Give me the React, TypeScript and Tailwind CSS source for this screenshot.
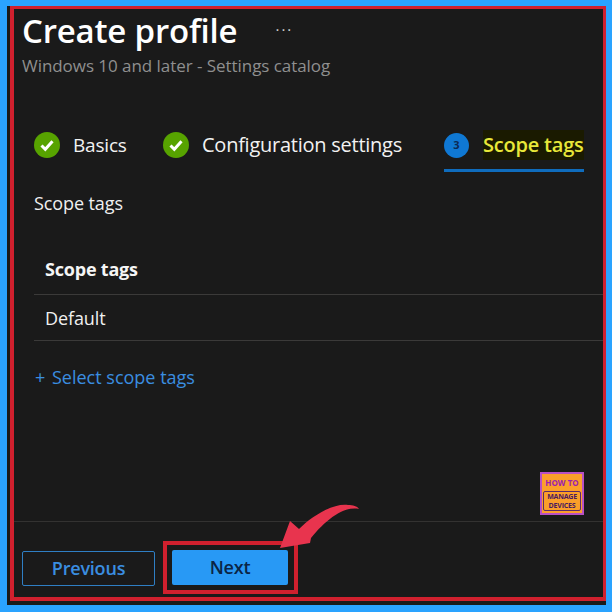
const font = 'font-["Open_Sans","Noto_Sans",sans-serif]';

const CheckBadge = () => (
  <svg width="26" height="26" viewBox="0 0 26 26" className="shrink-0">
    <circle cx="13" cy="13" r="13" fill="#57a300" />
    <path d="M7.5 13.5l3.8 3.8 7.2-8" fill="none" stroke="#ffffff" strokeWidth="3" />
  </svg>
);

const App = () => {
  return (
    <div className={`relative w-[612px] h-[612px] overflow-hidden bg-[#2aa3ff] pt-[6px] pl-[7px] ${font}`}>
      <div className="w-[599px] h-[599px] bg-[#1a1a1a] pl-[3px] pb-[4px]">
        <div className="h-full flex flex-col border-[#d0202e] border-t-[3px] border-l-4 border-r-[3px] border-b-4">
          {/* Header */}
          <div className="pl-2 pt-[3px]">
            <div className="flex items-center h-[38px]">
              <h1 className="text-[33px] leading-[38px] font-semibold text-white tracking-[-0.2px]">Create profile</h1>
              <span className="ml-[38px] mb-1 text-[15px] leading-none text-[#d0d0d0] tracking-[2px]">···</span>
            </div>
            <p className="mt-[5px] text-[17px] leading-[22px] text-[#8f8f8f] tracking-[-0.05px]">Windows 10 and later - Settings catalog</p>
          </div>

          {/* Steps */}
          <div className="flex items-start mt-[54px] pl-5 h-[53px]">
            <div className="flex items-center gap-[13px] w-[129px] h-[28px]">
              <CheckBadge />
              <span className="text-[19px] text-[#f2f2f2] tracking-[-0.2px]">Basics</span>
            </div>
            <div className="flex items-center gap-[13px] w-[281px] h-[28px]">
              <CheckBadge />
              <span className="text-[20px] text-[#f2f2f2] tracking-[-0.25px] whitespace-nowrap">Configuration settings</span>
            </div>
            <div className="flex flex-col w-[140px] h-[41px] border-b-[3px] border-[#0f6cbd]">
              <div className="flex items-center gap-[14px] h-[28px]">
                <span className="w-[25px] h-[25px] rounded-full bg-[#0f78d4] flex items-center justify-center text-[11px] font-bold text-[#0b2a55]">3</span>
                <span className="text-[20px] font-semibold text-[#e8e83a] bg-[#1a1a00] tracking-[-0.2px] whitespace-nowrap">Scope tags</span>
              </div>
            </div>
          </div>

          {/* Content */}
          <div className="flex-1 flex flex-col pl-5">
            <p className="text-[18px] leading-6 text-[#f0f0f0] mt-[7px] tracking-[-0.1px]">Scope tags</p>
            <div className="mt-[30px]">
              <div className="h-[50px] flex items-center pl-[11px] border-b border-[#3b3a39] text-[18px] font-bold text-[#f5f5f5] tracking-[-0.2px]">Scope tags</div>
              <div className="h-[46px] flex items-center pl-[11px] pt-[2px] border-b border-[#3b3a39] text-[18px] text-[#f0f0f0] tracking-[-0.1px]">Default</div>
            </div>
            <p className="mt-[24px] pl-px text-[18px] leading-6 text-[#3a8ee0]"><span className="mr-[2px]">+</span> Select scope tags</p>
            <div className="flex-1 flex items-end justify-end pr-[19px] pb-[6px]">
              <div className="w-[44px] h-[43px] border-2 border-[#b850c4] bg-[#fb9f2a] flex flex-col items-center">
                <span className="text-[8px] leading-[12px] mt-[3px] font-bold text-[#9a20b0] whitespace-nowrap">HOW TO</span>
                <div className="mt-[2px] w-[38px] h-[20px] border border-[#5a2a6a] rounded-[2px] flex flex-col items-center justify-center">
                  <span className="text-[7px] leading-[9px] font-bold text-[#4a1a60] whitespace-nowrap tracking-[-0.2px]">MANAGE</span>
                  <span className="text-[7px] leading-[9px] font-bold text-[#4a1a60] whitespace-nowrap tracking-[-0.2px]">DEVICES</span>
                </div>
              </div>
            </div>
          </div>

          {/* Footer */}
          <div className="h-[76px] border-t border-[#333231] flex items-start pl-2 pt-[19px]">
            <div className="mt-[10px] w-[133px] h-[35px] border border-[#2f7fc4] rounded-[2px] flex items-center justify-center text-[18px] font-semibold text-[#3a8ee0] tracking-[-0.2px]">Previous</div>
            <div className="ml-2 w-[135px] h-[53px] border-[4px] border-[#d0202e] flex items-center pl-[5px]">
              <div className="w-[116px] h-[35px] bg-[#2899f5] rounded-[2px] flex items-center justify-center text-[18px] font-semibold text-[#0b2545] tracking-[-0.2px]">Next</div>
            </div>
          </div>
        </div>
      </div>

      {/* Arrow annotation */}
      <svg width="612" height="612" viewBox="0 0 612 612" className="absolute inset-0 pointer-events-none">
        <path d="M280 548 L290 521 L299 529 C312 516 333 503 348 505 C353 505 357 506 359 509 C343 506 326 520 311 538 L310 543 Z" fill="#e8344e" />
      </svg>
    </div>
  );
};

export default App;
